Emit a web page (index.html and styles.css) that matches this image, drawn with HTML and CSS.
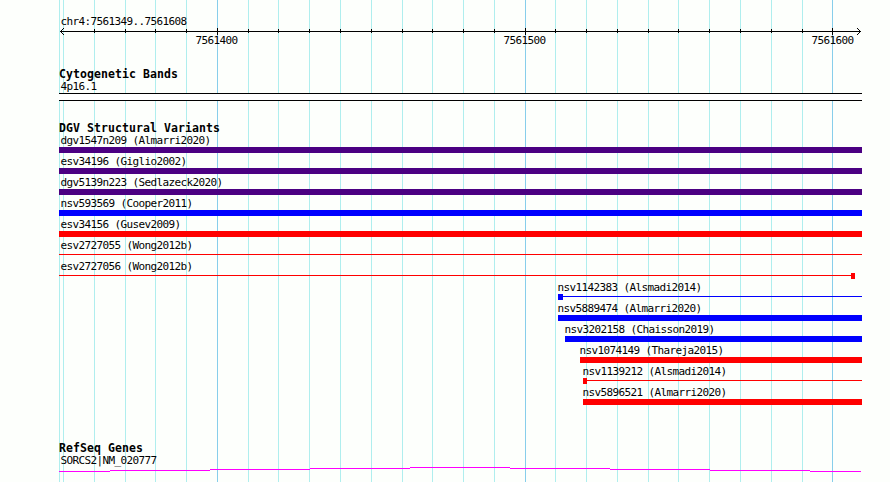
FILE: index.html
```html
<!DOCTYPE html>
<html lang="en">
<head>
    <meta charset="UTF-8">
    <title>chr4:7561349..7561608</title>
    <link rel="stylesheet" href="styles.css">
</head>
<body>
    <div class="browser">
        <svg class="gridlines" width="890" height="482" shape-rendering="crispEdges">
            <path class="minor" d="M59.5 0V482M63.5 0V482M94.5 0V482M125.5 0V482M155.5 0V482M186.5 0V482M248.5 0V482M278.5 0V482M309.5 0V482M340.5 0V482M371.5 0V482M402.5 0V482M432.5 0V482M463.5 0V482M494.5 0V482M555.5 0V482M586.5 0V482M617.5 0V482M648.5 0V482M678.5 0V482M709.5 0V482M740.5 0V482M771.5 0V482M802.5 0V482"/>
            <path class="major" d="M217.5 0V482M525.5 0V482M832.5 0V482"/>
        </svg>

        <div class="ruler">
            <div class="label">chr4:7561349..7561608</div>
            <svg class="axis" width="803" height="8" viewBox="59 28 803 8" shape-rendering="crispEdges">
                <path d="M60 31.5H861"/>
                <path d="M94.5 29V33M125.5 29V33M155.5 29V33M186.5 29V33M248.5 29V33M278.5 29V33M309.5 29V33M340.5 29V33M371.5 29V33M402.5 29V33M432.5 29V33M463.5 29V33M494.5 29V33M555.5 29V33M586.5 29V33M617.5 29V33M648.5 29V33M678.5 29V33M709.5 29V33M740.5 29V33M771.5 29V33M802.5 29V33"/>
                <path d="M217.5 28V35M525.5 28V35M832.5 28V35"/>
                <path d="M63 28.5h1M62 29.5h1M61 30.5h1M61 32.5h1M62 33.5h1M63 34.5h1"/>
                <path d="M857 28.5h1M858 29.5h1M859 30.5h1M859 32.5h1M858 33.5h1M857 34.5h1"/>
            </svg>
            <div class="positions">
                <span>7561400</span>
                <span>7561500</span>
                <span>7561600</span>
            </div>
        </div>

        <div class="track cytoband">
            <h2>Cytogenetic Bands</h2>
            <div class="label">4p16.1</div>
            <div class="band"></div>
        </div>

        <div class="track variants">
            <h2>DGV Structural Variants</h2>
            <div class="feature gain-loss"><div class="label">dgv1547n209 (Almarri2020)</div><div class="bar"></div></div>
            <div class="feature gain-loss"><div class="label">esv34196 (Giglio2002)</div><div class="bar"></div></div>
            <div class="feature gain-loss"><div class="label">dgv5139n223 (Sedlazeck2020)</div><div class="bar"></div></div>
            <div class="feature gain"><div class="label">nsv593569 (Cooper2011)</div><div class="bar"></div></div>
            <div class="feature loss"><div class="label">esv34156 (Gusev2009)</div><div class="bar"></div></div>
            <div class="feature loss"><div class="label">esv2727055 (Wong2012b)</div><div class="span"></div></div>
            <div class="feature loss ends-inside"><div class="label">esv2727056 (Wong2012b)</div><div class="span"><i class="end"></i></div></div>
            <div class="feature gain inner" style="margin-left: 499px"><div class="label">nsv1142383 (Alsmadi2014)</div><div class="span"><i class="start wide"></i></div></div>
            <div class="feature gain inner" style="margin-left: 499px"><div class="label">nsv5889474 (Almarri2020)</div><div class="bar"></div></div>
            <div class="feature gain inner" style="margin-left: 506px"><div class="label">nsv3202158 (Chaisson2019)</div><div class="bar"></div></div>
            <div class="feature loss inner" style="margin-left: 521px"><div class="label">nsv1074149 (Thareja2015)</div><div class="bar"></div></div>
            <div class="feature loss inner" style="margin-left: 524px"><div class="label">nsv1139212 (Alsmadi2014)</div><div class="span"><i class="start"></i></div></div>
            <div class="feature loss inner" style="margin-left: 524px"><div class="label">nsv5896521 (Almarri2020)</div><div class="bar"></div></div>
        </div>

        <div class="track genes">
            <h2>RefSeq Genes</h2>
            <div class="label">SORCS2|NM_020777</div>
            <svg class="intron" width="803" height="5" viewBox="59 467 803 5" shape-rendering="crispEdges">
                <path d="M59 471.5H110M110 470.5H210M210 469.5H310M310 468.5H410M410 467.5H510M510 468.5H610M610 469.5H710M710 470.5H810M810 471.5H861"/>
            </svg>
        </div>
    </div>
</body>
</html>
```
FILE: styles.css
```css
body {
    margin: 0;
    background-color: #fdfffc;
    color: #000;
    font-family: "DejaVu Sans Mono", monospace;
    font-size: 11px;
    letter-spacing: -0.622px;
}
.browser {
    position: relative;
    box-sizing: border-box;
    width: 890px;
    height: 482px;
    padding: 13px 28px 0 59px;
    overflow: hidden;
}
.gridlines {
    position: absolute;
    top: 0;
    left: 0;
    z-index: -1;
}
.gridlines .minor {
    stroke: #afeeee;
}
.gridlines .major {
    stroke: #87ceeb;
}
svg {
    display: block;
}
.label {
    height: 13px;
    line-height: 14px;
    padding-left: 1.5px;
    white-space: nowrap;
}
.ruler .label {
    height: 15px;
    line-height: 18px;
}
.axis path {
    stroke: #000;
}
.positions {
    display: flex;
    gap: 266px;
    height: 15px;
    padding-left: 136.5px;
    margin-top: -4px;
    line-height: 18px;
}
.positions span {
    width: 42px;
    white-space: nowrap;
}
h2 {
    height: 12px;
    margin: 0;
    font-size: 11.5px;
    line-height: 12px;
    letter-spacing: 0.077px;
    white-space: nowrap;
}
.cytoband {
    margin-top: 21px;
}
.band {
    height: 6px;
    border-top: 1px solid #000;
    border-bottom: 1px solid #000;
    background-color: #fff;
}
.variants {
    margin-top: 21px;
}
.feature {
    height: 21px;
}
.gain-loss {
    color: #4b0082;
}
.gain {
    color: #00f;
}
.loss {
    color: #f00;
}
.feature .label {
    color: #000;
}
.inner .label {
    padding-left: 0;
    margin-left: -0.5px;
}
.bar {
    height: 6px;
    background-color: currentColor;
}
.span {
    display: flex;
    height: 6px;
    background: linear-gradient(currentColor, currentColor) 0 2px / 100% 1px no-repeat;
}
.span i {
    width: 4px;
    background-color: currentColor;
}
.span .wide {
    width: 5px;
}
.span .end {
    margin-left: auto;
}
.ends-inside {
    margin-right: 7px;
}
.genes {
    margin-top: 35px;
}
.intron path {
    stroke: #f0f;
}
```
